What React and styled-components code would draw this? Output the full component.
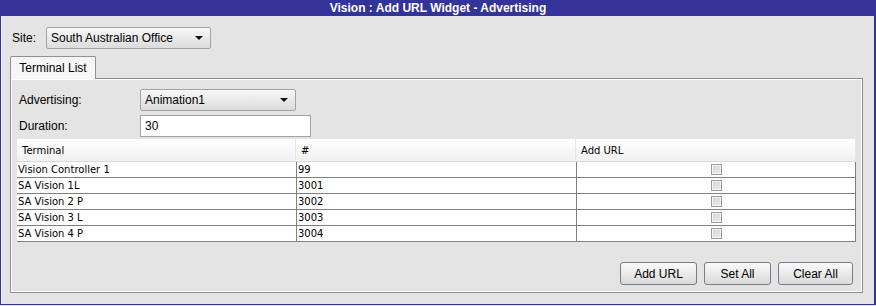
import React from "react"
import styled, { createGlobalStyle } from "styled-components"

const GlobalStyle = createGlobalStyle`
  html, body {
    margin: 0;
    padding: 0;
    background: #e4e4e4;
  }
  body {
    font-family: "Liberation Sans", Arial, sans-serif;
    font-size: 12px;
    color: #000;
  }
`

const terminals = [
  { name: "Vision Controller 1", number: "99" },
  { name: "SA Vision 1L", number: "3001" },
  { name: "SA Vision 2 P", number: "3002" },
  { name: "SA Vision 3 L", number: "3003" },
  { name: "SA Vision 4 P", number: "3004" }
]

const Window = styled.div`
  width: 876px;
  height: 305px;
  box-sizing: border-box;
  border: 1px solid #333399;
  border-top: none;
  border-right-width: 2px;
  background: #e4e4e4;
  display: flex;
  flex-direction: column;
`

const TitleBar = styled.div`
  height: 16px;
  background: #333399;
  color: #fff;
  font-weight: bold;
  font-size: 12px;
  line-height: 16px;
  text-align: center;
  margin: 0 -2px 0 -1px;
`

const Body = styled.div`
  flex: 1;
  display: flex;
  flex-direction: column;
  box-shadow: inset 1px 0 0 #f2f2f2;
`

const SiteRow = styled.div`
  display: flex;
  align-items: center;
  margin: 11px 0 0 11px;
`

const Label = styled.span`
  width: ${props => props.width}px;
  flex: none;
`

const Combo = styled.div`
  width: ${props => props.width}px;
  height: 22px;
  box-sizing: border-box;
  border: 1px solid #a3a3a3;
  border-radius: 2px;
  background: linear-gradient(#f7f7f7, #dcdcdc);
  display: flex;
  align-items: center;
  padding: 0 7px 0 4px;
  justify-content: space-between;
`

const Arrow = styled.span`
  width: 0;
  height: 0;
  border-left: 4px solid transparent;
  border-right: 4px solid transparent;
  border-top: 4px solid #111;
`

const TabStrip = styled.div`
  display: flex;
  margin: 7px 0 0 9px;
`

const Tab = styled.div`
  width: 86px;
  height: 23px;
  box-sizing: border-box;
  border: 1px solid #919191;
  border-bottom: none;
  border-radius: 2px 2px 0 0;
  background: #f6f6f6;
  display: flex;
  align-items: center;
  justify-content: center;
  font-size: 12px;
  margin-bottom: -1px;
  position: relative;
  z-index: 1;
`

const Panel = styled.div`
  margin: 0 11px 0 9px;
  height: 215px;
  box-sizing: border-box;
  border: 1px solid #8f8f8f;
  box-shadow: inset 1px 1px 0 #fff, inset -1px -1px 0 #fff;
  background: #e4e4e4;
  display: flex;
  flex-direction: column;
  padding: 10px 6px 7px 6px;
`

const FormRow = styled.div`
  display: flex;
  align-items: center;
  padding-left: 2px;
  margin-bottom: ${props => props.gap}px;
`

const TextField = styled.div`
  width: 171px;
  height: 22px;
  box-sizing: border-box;
  border: 1px solid #a3a3a3;
  background: #fff;
  padding-left: 4px;
  display: flex;
  align-items: center;
`

const Table = styled.div`
  width: 840px;
  display: grid;
  grid-template-columns: 279px 280px 280px;
`

const HeadCell = styled.div`
  height: 23px;
  box-sizing: border-box;
  background: linear-gradient(#ffffff, #f1f1f1);
  border-bottom: 1px solid #d8d8d8;
  border-right: 1px solid #e6e6e6;
  font-family: "DejaVu Sans", Tahoma, sans-serif;
  font-size: 10px;
  display: flex;
  align-items: center;
  padding-left: 5px;
`

const Cell = styled.div`
  height: 16px;
  box-sizing: border-box;
  background: #fff;
  border-bottom: 1px solid #808080;
  border-right: ${props => (props.last ? "1px solid #808080" : "none")};
  border-left: ${props => (props.first ? "none" : "1px solid #808080")};
  font-family: "DejaVu Sans", Tahoma, sans-serif;
  font-size: 10px;
  line-height: 15px;
  padding-left: 1px;
  display: flex;
  align-items: center;
  justify-content: ${props => (props.center ? "center" : "flex-start")};
`

const CheckBox = styled.span`
  width: 11px;
  height: 11px;
  box-sizing: border-box;
  border: 1px solid #9a9a9a;
  background: linear-gradient(135deg, #d4d4d4, #ececec);
  box-shadow: inset 0 0 0 1px #f4f4f4;
`

const Footer = styled.div`
  margin-top: auto;
  display: flex;
  justify-content: flex-end;
  gap: 7px;
  padding-right: 3px;
`

const Button = styled.button`
  width: ${props => props.width}px;
  height: 23px;
  border: 1px solid #7b7b8c;
  border-radius: 3px;
  background: linear-gradient(#fafafa, #dadada);
  font-family: "Liberation Sans", Arial, sans-serif;
  font-size: 12px;
  color: #000;
  padding: 0;
`

export default function App() {
  return (
    <>
      <GlobalStyle />
      <Window>
        <TitleBar>Vision : Add URL Widget - Advertising</TitleBar>
        <Body>
          <SiteRow>
            <Label width={34}>Site:</Label>
            <Combo width={165}>
              South Australian Office
              <Arrow />
            </Combo>
          </SiteRow>
          <TabStrip>
            <Tab>Terminal List</Tab>
          </TabStrip>
          <Panel>
            <FormRow gap={4}>
              <Label width={121}>Advertising:</Label>
              <Combo width={156}>
                Animation1
                <Arrow />
              </Combo>
            </FormRow>
            <FormRow gap={2}>
              <Label width={121}>Duration:</Label>
              <TextField>30</TextField>
            </FormRow>
            <Table>
              <HeadCell>Terminal</HeadCell>
              <HeadCell>#</HeadCell>
              <HeadCell>Add URL</HeadCell>
              {terminals.map(t => (
                <React.Fragment key={t.number}>
                  <Cell first>{t.name}</Cell>
                  <Cell>{t.number}</Cell>
                  <Cell center last>
                    <CheckBox />
                  </Cell>
                </React.Fragment>
              ))}
            </Table>
            <Footer>
              <Button width={77}>Add URL</Button>
              <Button width={67}>Set All</Button>
              <Button width={75}>Clear All</Button>
            </Footer>
          </Panel>
        </Body>
      </Window>
    </>
  )
}
